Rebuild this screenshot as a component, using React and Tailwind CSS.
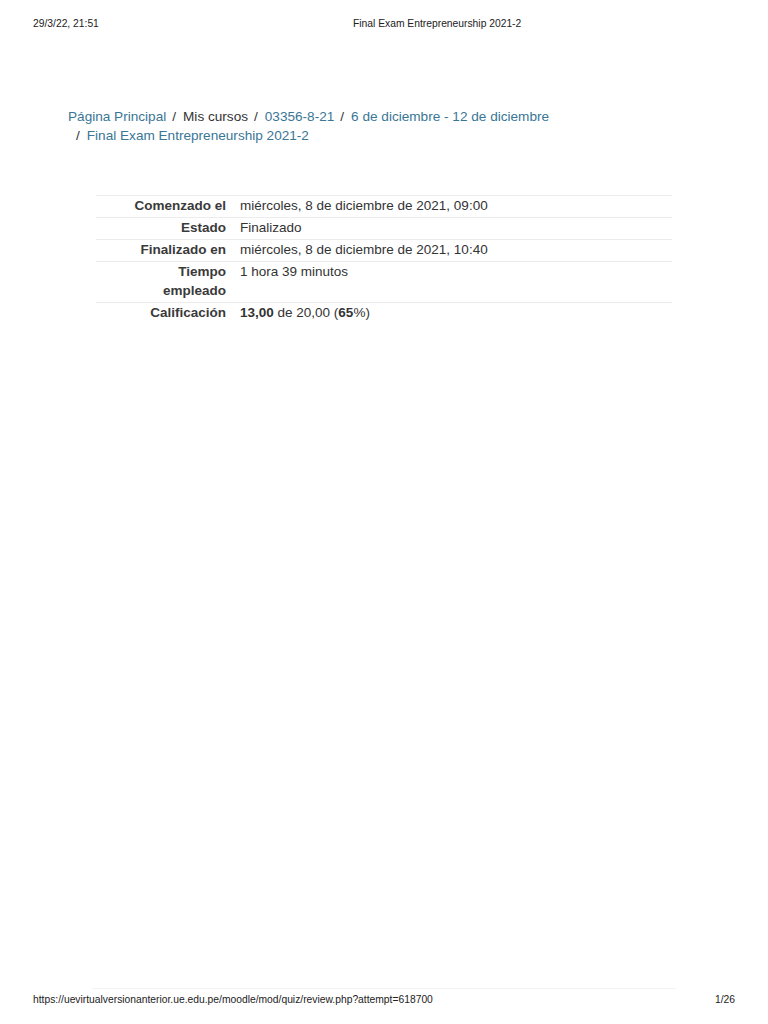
const crumbs = [
    { label: 'Página Principal', link: true },
    { label: 'Mis cursos', link: false },
    { label: '03356-8-21', link: true },
    { label: '6 de diciembre - 12 de diciembre', link: true },
    { label: 'Final Exam Entrepreneurship 2021-2', link: true },
];

const rows = [
    { label: 'Comenzado el', value: 'miércoles, 8 de diciembre de 2021, 09:00' },
    { label: 'Estado', value: 'Finalizado' },
    { label: 'Finalizado en', value: 'miércoles, 8 de diciembre de 2021, 10:40' },
    { label: 'Tiempo empleado', value: '1 hora 39 minutos' },
    {
        label: 'Calificación',
        value: (
            <>
                <b>13,00</b> de 20,00 (<b>65</b>%)
            </>
        ),
    },
];

export default function App() {
    return (
        <div className="h-[1024px] flex flex-col bg-white text-[#333] font-['Liberation_Sans',Arial,sans-serif]">
            {/* print header */}
            <div className="flex items-center h-[16px] mt-[16px] px-[33px] text-[10.3px] text-[#222]">
                <span className="w-[320px]">29/3/22, 21:51</span>
                <span>Final Exam Entrepreneurship 2021-2</span>
            </div>

            {/* breadcrumb */}
            <nav className="mt-[75px] ml-[68px] w-[510px] flex flex-wrap text-[13.6px] leading-[19px]">
                {crumbs.map((c, i) => (
                    <span key={i} className="whitespace-nowrap">
                        {i > 0 && (
                            <span className={`text-[#333] ${i === 4 ? 'pl-[8px] pr-[7px]' : 'pl-[6px] pr-[7px]'}`}>/</span>
                        )}
                        <span className={c.link ? 'text-[#3a7696]' : 'text-[#333]'}>{c.label}</span>
                    </span>
                ))}
            </nav>

            {/* summary table */}
            <div className="mt-[50px] ml-[96px] w-[576px] text-[13.5px] leading-[19px]">
                {rows.map((r, i) => (
                    <div key={i} className="flex border-t border-[#ececec] pb-[2px]">
                        <div className="w-[135px] pl-[30px] pr-[5px] text-right font-bold text-[#3a3a3a]">
                            {r.label}
                        </div>
                        <div className="pl-[9px] text-[#333]">{r.value}</div>
                    </div>
                ))}
            </div>

            <div className="flex-1" />

            {/* print footer */}
            <div className="mx-[92px] border-t border-[#f2f2f2]" />
            <div className="flex items-center justify-between h-[16px] mt-[3px] mb-[16px] px-[33px] text-[10.3px] text-[#222]">
                <span>https://uevirtualversionanterior.ue.edu.pe/moodle/mod/quiz/review.php?attempt=618700</span>
                <span>1/26</span>
            </div>
        </div>
    );
}
